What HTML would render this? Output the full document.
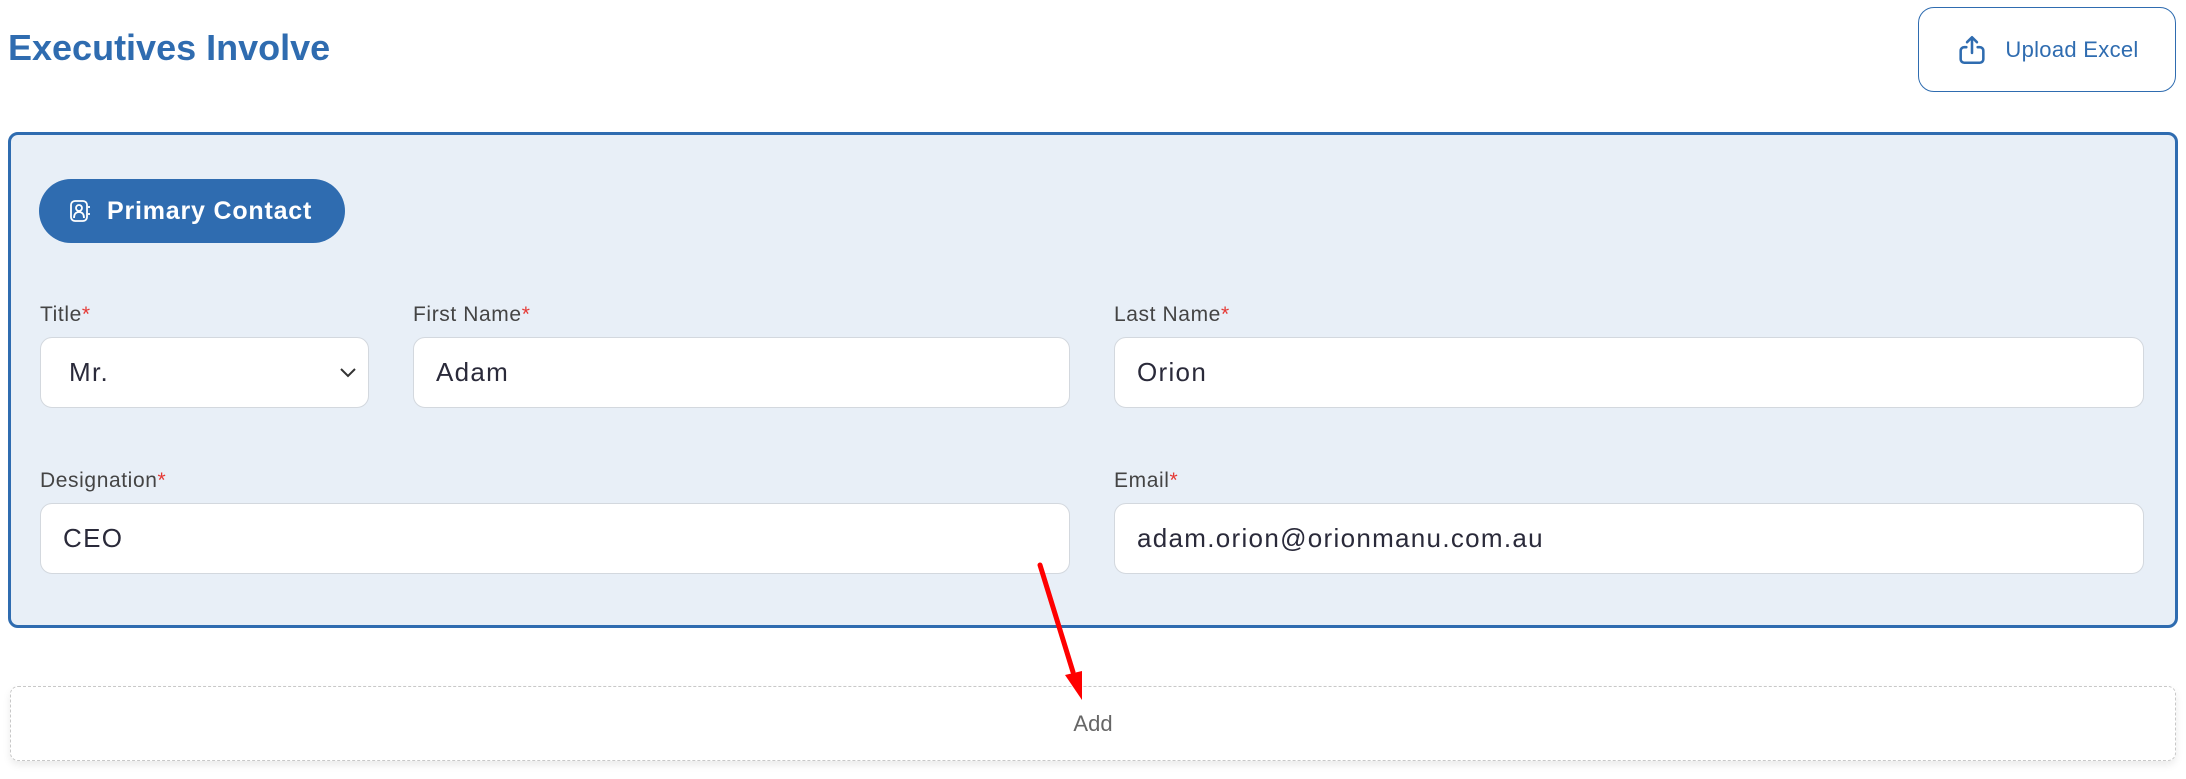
<!DOCTYPE html>
<html><head><meta charset="utf-8"><style>
*{box-sizing:border-box;margin:0;padding:0}
body{width:2186px;height:779px;background:#fff;font-family:"Liberation Sans",sans-serif;position:relative;overflow:hidden}
.abs{position:absolute}
h1{position:absolute;left:8px;top:27px;font-size:36px;font-weight:bold;color:#2f6cb0;letter-spacing:0px}
.up{left:1918px;top:7px;width:258px;height:85px;border:1.5px solid #2f6cb0;border-radius:16px;color:#2f6cb0;font-size:22px;display:flex;align-items:center;justify-content:center;gap:16px;letter-spacing:0.3px}
.panel{left:8px;top:132px;width:2170px;height:496px;border:3px solid #2f6cb0;border-radius:10px;background:#e8eff7}
.pill{left:39px;top:179px;width:306px;height:64px;background:#2f6cb0;border-radius:32px;color:#fff;font-size:25px;font-weight:bold;display:flex;align-items:center;padding-left:30px;gap:16px;letter-spacing:0.8px}
.lbl{font-size:21px;color:#444;letter-spacing:0.6px}
.lbl b{color:#e53935;font-weight:normal}
.in{background:#fff;border:1.5px solid #d3d8de;border-radius:12px;height:71px;font-size:26px;color:#2a2a3a;display:flex;align-items:center;padding-left:22px;letter-spacing:1.3px}
</style></head><body>
<h1>Executives Involve</h1>
<div class="abs up"><svg width="34" height="34" viewBox="0 0 24 24" fill="none" stroke="#2f6cb0" stroke-width="1.8" stroke-linecap="round" stroke-linejoin="round"><path d="M12 3v11M8.5 6.5 12 3l3.5 3.5"/><path d="M8 10H6.5A2.5 2.5 0 0 0 4 12.5v6A2.5 2.5 0 0 0 6.5 21h11a2.5 2.5 0 0 0 2.5-2.5v-6A2.5 2.5 0 0 0 17.5 10H16"/></svg>Upload Excel</div>
<div class="abs panel"></div>
<div class="abs pill"><svg width="22" height="24" viewBox="0 0 22 24" fill="none" stroke="#fff" stroke-width="1.8"><rect x="2" y="2" width="16" height="20" rx="4"/><circle cx="10" cy="9" r="3"/><path d="M5 19c0-4 2-6 5-6s5 2 5 6"/><path d="M20 7v2M20 14v2"/></svg>Primary Contact</div>
<div class="abs lbl" style="left:40px;top:303px">Title<b>*</b></div>
<div class="abs lbl" style="left:413px;top:303px">First Name<b>*</b></div>
<div class="abs lbl" style="left:1114px;top:303px">Last Name<b>*</b></div>
<div class="abs in" style="left:40px;top:337px;width:329px;padding-left:28px">Mr.<svg class="abs" style="right:10px;top:28px" width="20" height="14" viewBox="0 0 20 14" fill="none" stroke="#333" stroke-width="2"><path d="M3 3l7 7 7-7"/></svg></div>
<div class="abs in" style="left:413px;top:337px;width:657px">Adam</div>
<div class="abs in" style="left:1114px;top:337px;width:1030px">Orion</div>
<div class="abs lbl" style="left:40px;top:469px">Designation<b>*</b></div>
<div class="abs lbl" style="left:1114px;top:469px">Email<b>*</b></div>
<div class="abs in" style="left:40px;top:503px;width:1030px">CEO</div>
<div class="abs in" style="left:1114px;top:503px;width:1030px">adam.orion@orionmanu.com.au</div>
<div class="abs" style="left:10px;top:686px;width:2166px;height:75px;border:1.5px dashed #c8c8c8;border-radius:8px;box-shadow:0 4px 8px rgba(0,0,0,0.08);display:flex;align-items:center;justify-content:center;font-size:22px;color:#666">Add</div>
<svg class="abs" style="left:0;top:0" width="2186" height="779"><line x1="1040" y1="565" x2="1073" y2="672" stroke="#f00" stroke-width="5" stroke-linecap="round"/><path d="M1065 675 L1082 671 L1082 700 Z" fill="#f00"/></svg>
</body></html>
